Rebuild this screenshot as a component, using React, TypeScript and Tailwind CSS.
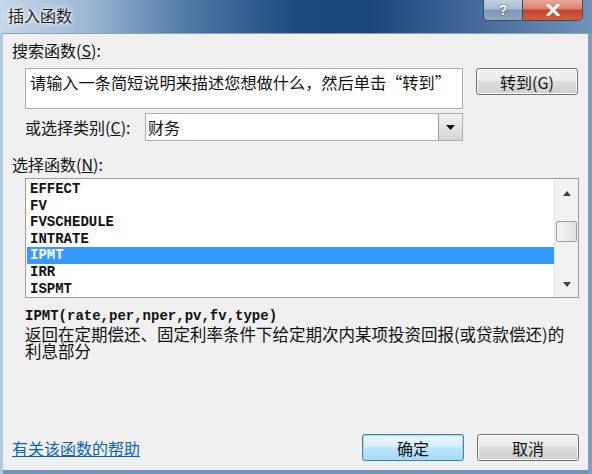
import React from 'react';

const cjk = "font-['Noto_Sans_CJK_SC',sans-serif]";
const mono = "font-['Liberation_Mono','Noto_Sans_CJK_SC',monospace]";

const functions = ['EFFECT', 'FV', 'FVSCHEDULE', 'INTRATE', 'IPMT', 'IRR', 'ISPMT'];

const WinButton = ({ label, isDefault }: { label: string; isDefault?: boolean }) => (
  <button
    className={`w-[102px] h-[27px] rounded-[3px] border text-[16px] leading-none text-[#111] ${cjk} ${
      isDefault
        ? 'border-[#3c7fb1] shadow-[inset_0_0_0_1px_#a6dcf5] bg-[linear-gradient(#eaf6fd_0%,#d9f0fc_45%,#bee6fd_50%,#a7d9f5_100%)]'
        : 'border-[#707070] shadow-[inset_0_0_0_1px_#fcfcfc] bg-[linear-gradient(#f2f2f2_0%,#ebebeb_45%,#dddddd_50%,#cfcfcf_100%)]'
    }`}
  >
    {label}
  </button>
);

const TitleBar = () => (
  <div className="h-[33px] flex items-start bg-[linear-gradient(90deg,#c6d7e8_0%,#9fbad5_14%,#4f78a5_32%,#1d4a7d_50%,#1b4679_62%,#43699a_80%,#7193b9_100%)]">
    <div className={`pl-[8px] pt-[5px] text-[16px] leading-[20px] text-[#1c1c1c] [text-shadow:0_0_6px_#ffffff,0_0_3px_#ffffff] ${cjk}`}>
      插入函数
    </div>
    <div className="flex-1" />
    <div className="mr-[9px] flex h-[21px] rounded-b-[5px] border border-t-0 border-[#3b4b5f] overflow-hidden">
      <div className="w-[39px] flex items-center justify-center border-r border-[#3b4b5f] bg-[linear-gradient(#c2d1e1_0%,#a9bccf_45%,#7f98b3_50%,#8fa8c2_100%)]">
        <span className="text-white text-[14px] font-bold leading-none font-['Liberation_Sans',sans-serif] [text-shadow:0_0_2px_#1b3350]">?</span>
      </div>
      <div className="w-[59px] flex items-center justify-center bg-[linear-gradient(#e9a99a_0%,#d9806d_45%,#c6442e_50%,#d0603f_100%)]">
        <svg width="14" height="12" viewBox="0 0 14 12">
          <path d="M2 1 L12 11 M12 1 L2 11" stroke="#ffffff" strokeWidth="3" strokeLinecap="square" />
        </svg>
      </div>
    </div>
  </div>
);

export default function App() {
  return (
    <div className="w-[592px] h-[474px] flex flex-col overflow-hidden bg-[#6f93bb]">
      <TitleBar />
      <div className="flex-1 flex bg-[linear-gradient(90deg,#b3c9df_0px,#b3c9df_3px,transparent_3px,transparent_588px,#7f9ec2_588px)]">
        <div className="ml-[3px] mr-[4px] mb-[4px] flex-1 flex flex-col bg-[#f0f0f0] border-t border-[#8ba2bb] pl-[9px] pr-[9px] text-[#111]">
          <div className={`mt-[6px] text-[16px] leading-[20px] ${cjk}`}>搜索函数(<span className="underline">S</span>):</div>

          <div className="mt-[8px] flex items-start">
            <div className={`ml-[13px] w-[438px] h-[41px] bg-white border border-[#abadb3] px-[4px] pt-[3px] text-[16.2px] leading-[20px] whitespace-nowrap ${cjk}`}>
              请输入一条简短说明来描述您想做什么，然后单击“转到”
            </div>
            <div className="ml-[13px]">
              <WinButton label="转到(G)" />
            </div>
          </div>

          <div className="mt-[4px] ml-[13px] flex items-center">
            <div className={`w-[120px] text-[16px] leading-[20px] ${cjk}`}>或选择类别(<span className="underline">C</span>):</div>
            <div className="w-[318px] h-[28px] bg-white border border-[#abadb3] flex items-stretch">
              <div className={`flex-1 pl-[2px] text-[16px] leading-[26px] ${cjk}`}>财务</div>
              <div className="w-[24px] border-l border-[#9a9a9a] bg-[linear-gradient(#f2f2f2,#d6d6d6)] flex items-center justify-center">
                <svg width="9" height="5" viewBox="0 0 9 5">
                  <path d="M0 0 H9 L4.5 5 Z" fill="#111" />
                </svg>
              </div>
            </div>
          </div>

          <div className={`mt-[13px] text-[16px] leading-[20px] ${cjk}`}>选择函数(<span className="underline">N</span>):</div>

          <div className="mt-[4px] ml-[13px] w-[554px] h-[120px] bg-white border border-[#9c9c9c] flex">
            <div className="flex-1 pt-[2px] pl-[1px]">
              {functions.map((f) => (
                <div
                  key={f}
                  className={`h-[16.6px] pl-[3px] text-[14px] font-bold leading-[16.6px] ${mono} ${
                    f === 'IPMT' ? 'bg-[#3399ff] text-white' : 'text-[#111]'
                  }`}
                >
                  {f}
                </div>
              ))}
            </div>
            <div className="w-[24px] bg-[#f2f2f2] border-l border-[#e4e4e4] flex flex-col items-center">
              <svg className="mt-[12px]" width="8" height="5" viewBox="0 0 8 5">
                <path d="M0 5 H8 L4 0 Z" fill="#404040" />
              </svg>
              <div className="mt-[25px] w-[21px] h-[21px] rounded-[2px] border border-[#9e9e9e] bg-[linear-gradient(90deg,#f3f3f3,#e2e2e2)]" />
              <div className="flex-1" />
              <svg className="mb-[10px]" width="8" height="5" viewBox="0 0 8 5">
                <path d="M0 0 H8 L4 5 Z" fill="#404040" />
              </svg>
            </div>
          </div>

          <div className={`mt-[10px] ml-[13px] h-[16px] text-[14px] font-bold leading-[16px] ${mono}`}>
            IPMT(rate,per,nper,pv,fv,type)
          </div>
          <div className={`mt-[2px] ml-[13px] text-[16.5px] leading-[17px] whitespace-nowrap ${cjk}`}>
            <div className="h-[17px]">返回在定期偿还、固定利率条件下给定期次内某项投资回报(或贷款偿还)的</div>
            <div className="h-[17px]">利息部分</div>
          </div>

          <div className="flex-1" />

          <div className="mb-[9px] flex items-center">
            <a className={`text-[16px] leading-[20px] text-[#0b63b6] underline ${cjk}`}>有关该函数的帮助</a>
            <div className="flex-1" />
            <WinButton label="确定" isDefault />
            <div className="ml-[13px]">
              <WinButton label="取消" />
            </div>
          </div>
        </div>
      </div>
    </div>
  );
}
